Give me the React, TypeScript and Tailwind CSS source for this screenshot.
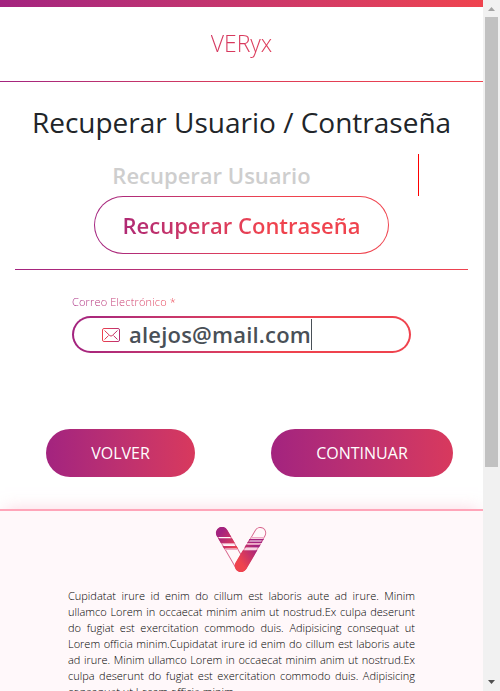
import React from "react";

const footerLines = [
  "Cupidatat irure id enim do cillum est laboris aute ad irure. Minim",
  "ullamco Lorem in occaecat minim anim ut nostrud.Ex culpa deserunt",
  "do fugiat est exercitation commodo duis. Adipisicing consequat ut",
  "Lorem officia minim.Cupidatat irure id enim do cillum est laboris aute",
  "ad irure. Minim ullamco Lorem in occaecat minim anim ut nostrud.Ex",
  "culpa deserunt do fugiat est exercitation commodo duis. Adipisicing",
];

function MailIcon() {
  return (
    <svg width="18" height="14" viewBox="0 0 18 14" fill="none" stroke="url(#mail)" className="shrink-0">
      <defs>
        <linearGradient id="mail" gradientUnits="userSpaceOnUse" x1="0" y1="0" x2="18" y2="0">
          <stop offset="0" stopColor="#ef434e" />
          <stop offset="1" stopColor="#b52d73" />
        </linearGradient>
      </defs>
      <rect x="0.5" y="0.5" width="17" height="13" rx="1.5" />
      <path d="M2.5 2.5 L7.8 7.6 Q9 8.6 10.2 7.6 L15.5 2.5 M2.5 11.5 L6.5 7.6 M15.5 11.5 L11.5 7.6" />
    </svg>
  );
}

function Logo() {
  return (
    <svg width="52" height="46" viewBox="0 0 52 46" className="block">
      <defs>
        <linearGradient id="armLeft" gradientUnits="userSpaceOnUse" x1="4" y1="8" x2="22" y2="22">
          <stop offset="0" stopColor="#a3237f" />
          <stop offset="1" stopColor="#ef434e" />
        </linearGradient>
        <linearGradient id="armRight" gradientUnits="userSpaceOnUse" x1="24" y1="33" x2="42" y2="21">
          <stop offset="0" stopColor="#ef434e" />
          <stop offset="1" stopColor="#a3237f" />
        </linearGradient>
        <clipPath id="leftBands">
          <path d="M0 0H52V10H0Z M0 11.3H52V16.5H0Z M0 19H52V21.5H0Z" />
        </clipPath>
        <clipPath id="leftTints">
          <path d="M0 16.5H52V17.3H0Z M0 22H52V23H0Z" />
        </clipPath>
        <clipPath id="rightBands">
          <path d="M0 12H52V13.5H0Z M0 14.5H52V16H0Z M0 17.5H52V20.5H0Z M0 23.3H52V46H0Z" />
        </clipPath>
        <clipPath id="rightTints">
          <path d="M0 10H52V11.5H0Z M0 16H52V17.5H0Z M0 21.5H52V22.5H0Z" />
        </clipPath>
      </defs>
      <path d="M7 6 L26 38.8" stroke="#d9668d" strokeWidth="12" strokeLinecap="round" />
      <path d="M7 6 L26 38.8" stroke="#fff8fa" strokeWidth="10.2" strokeLinecap="round" />
      <path d="M7 6 L26 38.8" stroke="url(#armLeft)" strokeWidth="12.2" strokeLinecap="round" clipPath="url(#leftBands)" />
      <path d="M7 6 L26 38.8" stroke="#efabc5" strokeWidth="12" clipPath="url(#leftTints)" />
      <path d="M45.2 6 L26 38.8" stroke="#d9668d" strokeWidth="12" strokeLinecap="round" />
      <path d="M45.2 6 L26 38.8" stroke="#fff8fa" strokeWidth="10.2" strokeLinecap="round" />
      <path d="M45.2 6 L26 38.8" stroke="url(#armRight)" strokeWidth="12.6" strokeLinecap="round" clipPath="url(#rightBands)" />
      <path d="M45.2 6 L26 38.8" stroke="#efabc5" strokeWidth="12" clipPath="url(#rightTints)" />
    </svg>
  );
}

function Scrollbar() {
  return (
    <div className="flex w-[17px] shrink-0 flex-col items-center justify-between bg-[#f1f1f1]">
      <div className="flex h-[467px] flex-col items-center">
        <svg width="7" height="17" viewBox="0 0 7 17"><path d="M0 11L3.5 7L7 11Z" fill="#a3a3a3" /></svg>
        <div className="w-[13px] flex-1 bg-[#c1c1c1]" />
      </div>
      <svg width="7" height="17" viewBox="0 0 7 17" className="block"><path d="M0 6L3.5 10L7 6Z" fill="#505050" /></svg>
    </div>
  );
}

export default function App() {
  return (
    <div className="flex h-[691px] w-[500px] overflow-hidden bg-white font-['Open_Sans',sans-serif] text-[#212529]">
      <div className="flex h-full w-[483px] flex-col overflow-hidden">
        <div className="h-[7px] shrink-0 bg-linear-to-r from-[#a3237f] to-[#ef434e]" />
        <header className="flex h-[74px] shrink-0 items-center justify-center pb-[2px]">
          <span className="bg-linear-to-r from-[#d43760] to-[#de3c59] bg-clip-text text-[23px] leading-[30px] font-light text-transparent">VERyx</span>
        </header>
        <div className="h-px shrink-0 bg-linear-to-r from-[#a3237f] via-[#dc3c58] to-[#ef434e]" />
        <h1 className="mt-[23px] shrink-0 text-center text-[28px] leading-[34px] whitespace-nowrap">Recuperar Usuario / Contraseña</h1>
        <section className="mx-[15px] flex h-[131px] shrink-0 flex-col pt-[15px]">
          <div className="ml-[50px] flex h-[42px] w-[354px] items-center justify-center border-r border-[#ff0000] pr-[60px]">
            <span className="text-[22px] leading-[33px] font-semibold text-[#cecece]">Recuperar Usuario</span>
          </div>
          <div className="ml-[79px] h-[58px] w-[295px] rounded-full bg-linear-to-r from-[#a3237f] to-[#ef434e] to-60% p-px">
            <div className="flex h-full items-center justify-center rounded-full bg-white">
              <span className="bg-linear-to-r from-[#b02974] to-[#ef434e] to-60% bg-clip-text text-[22px] leading-[33px] font-semibold text-transparent">Recuperar Contraseña</span>
            </div>
          </div>
          <div className="mt-[15px] h-px bg-linear-to-r from-[#a3237f] to-[#ef434e]" />
        </section>
        <form className="ml-[72px] flex h-[159px] w-[339px] shrink-0 flex-col items-start pt-[24px]">
          <label className="bg-linear-to-r from-[#a3237f] to-[#ef434e] bg-clip-text text-[11px] leading-[16px] font-light tracking-[0.15px] text-transparent">Correo Electrónico *</label>
          <div className="mt-[6px] h-[37px] w-full rounded-full bg-linear-to-r from-[#a3237f] to-[#ef434e] to-60% p-[2px]">
            <div className="flex h-full items-center rounded-full bg-white pl-[28px]">
              <MailIcon />
              <span className="ml-[9px] text-[22px] leading-[31px] font-semibold tracking-[0.2px] text-[#495057]">alejos@mail.com</span>
              <span className="h-[31px] w-px bg-[#495057]" />
            </div>
          </div>
        </form>
        <div className="flex h-[80px] shrink-0 items-start justify-between pr-[30px] pl-[46px] text-white">
          <button className="h-[48px] w-[149px] rounded-full bg-linear-to-r from-[#a3237f] to-[#d8395d] text-[16px] leading-[24px]">VOLVER</button>
          <button className="h-[48px] w-[182px] rounded-full bg-linear-to-r from-[#a3237f] to-[#d8395d] text-[16px] leading-[24px]">CONTINUAR</button>
        </div>
        <footer className="flex flex-1 flex-col border-t-2 border-[#ffa5b9] bg-[#fff8fa] pt-[16px] shadow-[0_-5px_15px_-5px_#f8bfd0a0]">
          <div className="ml-[215px]"><Logo /></div>
          <div className="mt-[15px] ml-[68px] w-[347px] text-[11px] leading-[16px] font-light text-black">
            {footerLines.map((line) => (
              <p key={line} className="text-justify whitespace-nowrap [text-align-last:justify]">{line}</p>
            ))}
            <p>consequat ut Lorem officia minim.</p>
          </div>
        </footer>
      </div>
      <Scrollbar />
    </div>
  );
}
